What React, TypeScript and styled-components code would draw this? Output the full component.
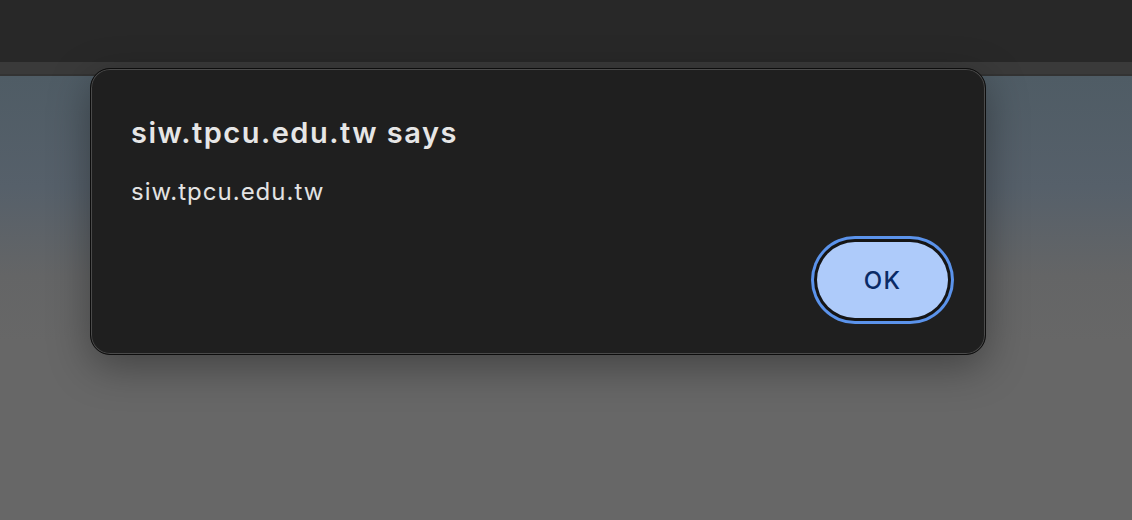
import React from "react";
import styled, {createGlobalStyle} from "styled-components";

const GlobalStyle = createGlobalStyle`
  html, body {
    margin: 0;
    padding: 0;
    width: 1132px;
    height: 520px;
    overflow: hidden;
    background: #676767;
  }
`;

const Page = styled.div`
  position: relative;
  width: 1132px;
  height: 520px;
  display: flex;
  flex-direction: column;
  font-family: Inter, "Noto Sans", "Liberation Sans", sans-serif;
`;

const TopBar = styled.div`
  height: 62px;
  background: #282828;
`;

const TabStrip = styled.div`
  height: 12px;
  background: #3a3a3a;
  border-bottom: 2px solid #333;
`;

const Content = styled.div`
  flex: 1;
  background: linear-gradient(180deg, #4f5c65 0%, #56606a 25%, #646566 45%, #676767 60%, #676767 100%);
`;

const Dialog = styled.div`
  position: absolute;
  left: 90px;
  top: 68px;
  width: 896px;
  height: 287px;
  box-sizing: border-box;
  border: 1px solid #0d0d0d;
  border-radius: 20px;
  background: #1f1f1f;
  box-shadow: inset 0 0 0 1px #4a4a4a, 0 12px 40px rgba(0, 0, 0, 0.35);
  padding: 46px 37px 36px 40px;
  display: flex;
  flex-direction: column;
`;

const Title = styled.h1`
  margin: 0;
  font-size: 29px;
  line-height: 35px;
  font-weight: 600;
  letter-spacing: 1.5px;
  color: #e6e6e6;
`;

const Message = styled.p`
  margin: 27px 0 0;
  font-size: 24px;
  line-height: 30px;
  font-weight: 400;
  letter-spacing: 1px;
  color: #e3e3e3;
`;

const Actions = styled.div`
  margin-top: auto;
  display: flex;
  justify-content: flex-end;
`;

const OkButton = styled.button`
  width: 131px;
  height: 76px;
  border: none;
  border-radius: 38px;
  background: #aecbfa;
  color: #0a2a66;
  font-family: inherit;
  font-size: 24px;
  font-weight: 500;
  letter-spacing: 1.2px;
  box-shadow: 0 0 0 3px #151515, 0 0 0 6px #5b93eb;
  cursor: pointer;
`;

export default function App() {
  return (
    <>
      <GlobalStyle />
      <Page>
        <TopBar />
        <TabStrip />
        <Content />
        <Dialog>
          <Title>siw.tpcu.edu.tw says</Title>
          <Message>siw.tpcu.edu.tw</Message>
          <Actions>
            <OkButton>OK</OkButton>
          </Actions>
        </Dialog>
      </Page>
    </>
  );
}
